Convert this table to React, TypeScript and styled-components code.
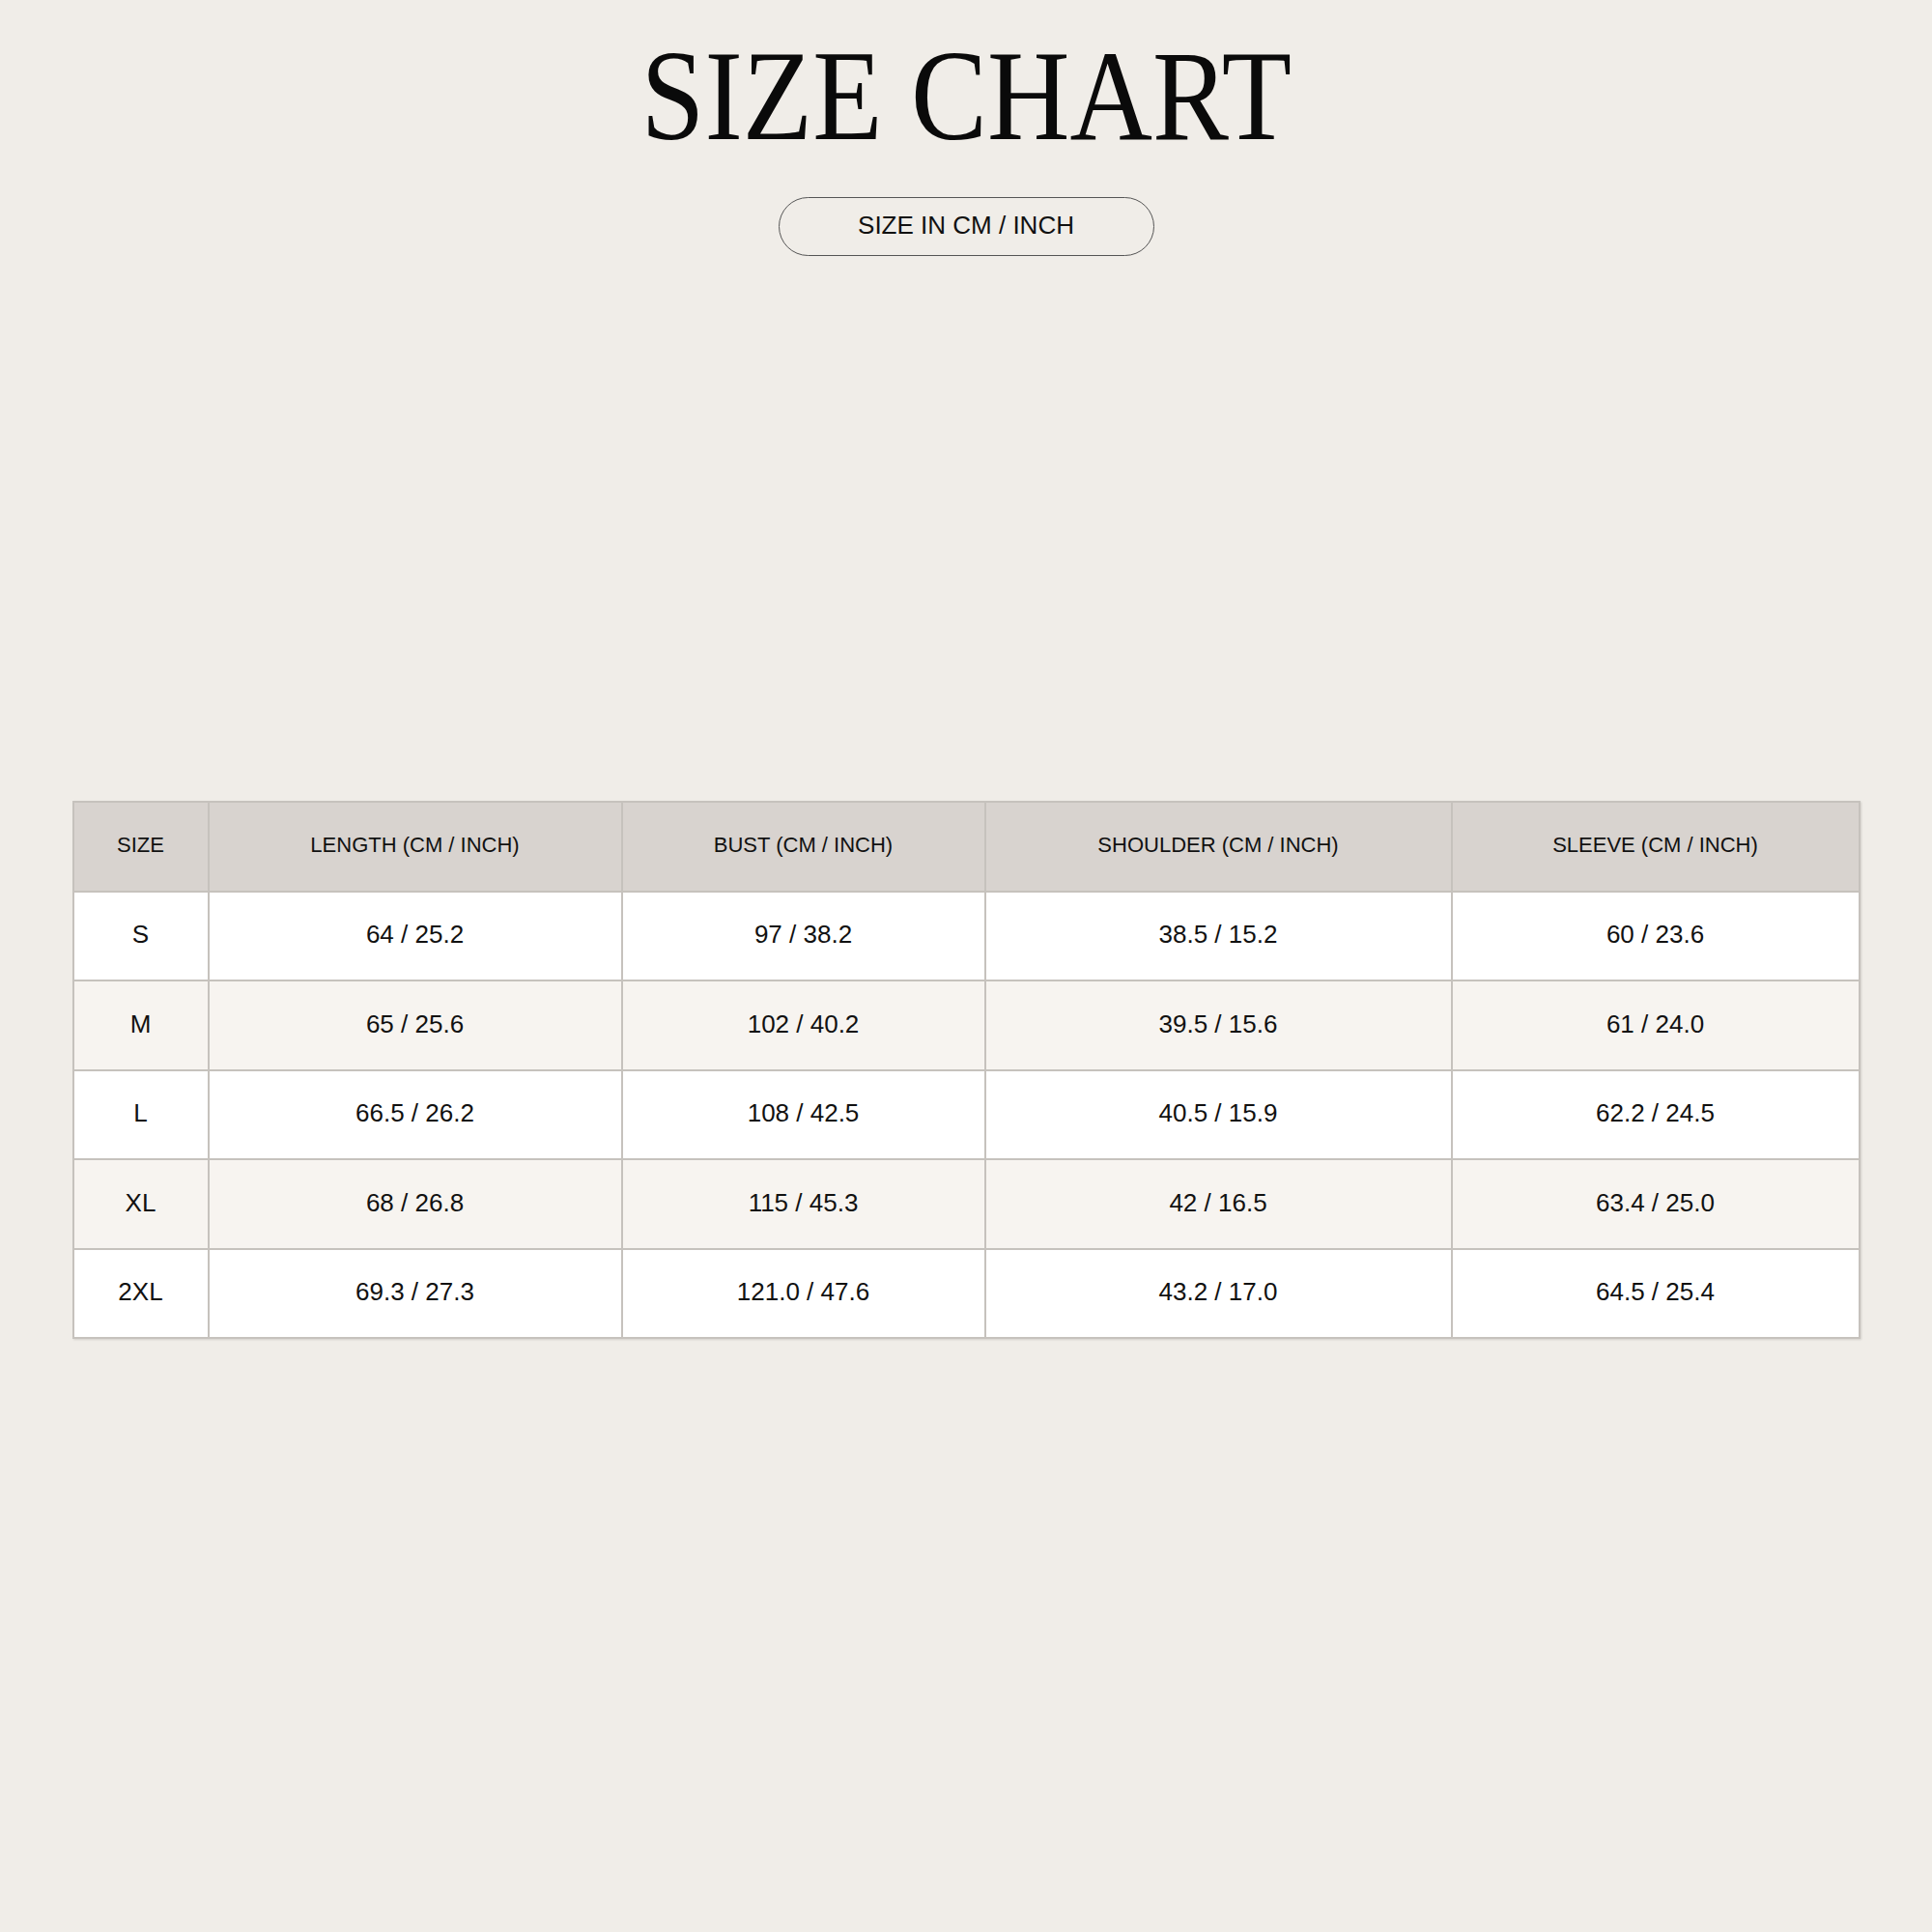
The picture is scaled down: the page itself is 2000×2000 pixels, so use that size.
import React from 'react';
import styled, { createGlobalStyle } from 'styled-components';

const GlobalStyle = createGlobalStyle`
  html, body {
    margin: 0;
    padding: 0;
    background: #f0ede8;
  }

  body {
    font-family: "Liberation Sans", Arial, sans-serif;
    color: #111;
  }
`;

const Page = styled.div`
  width: 2000px;
  height: 2000px;
  box-sizing: border-box;
  padding-top: 33px;
  display: flex;
  flex-direction: column;
  align-items: center;
  background: #f0ede8;
`;

const Title = styled.h1`
  margin: 0;
  font-family: "Liberation Serif", "Times New Roman", serif;
  font-weight: 400;
  font-size: 133px;
  line-height: 1;
  color: #0a0a0a;
  white-space: nowrap;
  transform: scaleX(0.89);
  transform-origin: center;
`;

const UnitPill = styled.div`
  margin-top: 38px;
  width: 389px;
  height: 61px;
  box-sizing: border-box;
  padding-bottom: 2px;
  border: 1px solid #555;
  border-radius: 31px;
  display: flex;
  align-items: center;
  justify-content: center;
  font-size: 26px;
  color: #111;
`;

const TableWrap = styled.div`
  margin-top: 564px;
  width: 1851px;
  box-shadow: 1px 1px 2px rgba(0, 0, 0, 0.12);
`;

const Grid = styled.div`
  display: grid;
  grid-template-columns: 138px 426px 374px 481px 420px;
  grid-auto-rows: 90.5px;
  gap: 2px;
  padding: 2px;
  background: #c6c2bd;
`;

const HeadCell = styled.div`
  display: flex;
  align-items: center;
  justify-content: center;
  padding-bottom: 3px;
  background: #d8d3cf;
  font-size: 22px;
  color: #111;
`;

const Cell = styled.div<{ $alt?: boolean }>`
  display: flex;
  align-items: center;
  justify-content: center;
  padding-bottom: 2px;
  background: ${(p) => (p.$alt ? '#f7f4f0' : '#ffffff')};
  font-size: 26px;
  color: #111;
`;

const headers = [
  'SIZE',
  'LENGTH (CM / INCH)',
  'BUST (CM / INCH)',
  'SHOULDER (CM / INCH)',
  'SLEEVE (CM / INCH)',
];

const rows = [
  ['S', '64 / 25.2', '97 / 38.2', '38.5 / 15.2', '60 / 23.6'],
  ['M', '65 / 25.6', '102 / 40.2', '39.5 / 15.6', '61 / 24.0'],
  ['L', '66.5 / 26.2', '108 / 42.5', '40.5 / 15.9', '62.2 / 24.5'],
  ['XL', '68 / 26.8', '115 / 45.3', '42 / 16.5', '63.4 / 25.0'],
  ['2XL', '69.3 / 27.3', '121.0 / 47.6', '43.2 / 17.0', '64.5 / 25.4'],
];

const App: React.FC = () => {
  return (
    <>
      <GlobalStyle />
      <Page>
        <Title>SIZE CHART</Title>
        <UnitPill>SIZE IN CM / INCH</UnitPill>

        <TableWrap>
          <Grid>
            {headers.map((h) => (
              <HeadCell key={h}>{h}</HeadCell>
            ))}
            {rows.map((row, i) =>
              row.map((value, j) => (
                <Cell key={`${i}-${j}`} $alt={i % 2 === 1}>
                  {value}
                </Cell>
              ))
            )}
          </Grid>
        </TableWrap>
      </Page>
    </>
  );
};

export default App;
